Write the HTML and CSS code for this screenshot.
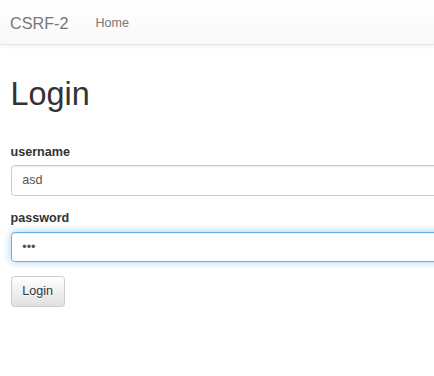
FILE: index.html
```html
<!DOCTYPE html>
<html lang="en">
  <head>
    <meta charset="utf-8" />
    <meta name="viewport" content="width=device-width, initial-scale=1" />
    <title>CSRF-2</title>
    <link rel="stylesheet" href="styles.css">
  </head>
  <body>
    <nav class="navbar">
      <a class="navbar-brand" href="#">CSRF-2</a>
      <ul class="nav">
        <li><a href="#">Home</a></li>
      </ul>
    </nav>

    <div class="container">
      <h1>Login</h1>
      <form class="login-form">
        <div class="form-group">
          <label for="username">username</label>
          <input class="form-control" id="username" type="text" value="asd" />
        </div>
        <div class="form-group">
          <label for="password">password</label>
          <input class="form-control focused" id="password" type="password" value="asd" />
        </div>
        <button class="btn" type="submit">Login</button>
      </form>
    </div>
  </body>
</html>
```

FILE: styles.css
```css
* {
  box-sizing: border-box;
}
html,
body {
  margin: 0;
  width: 100%;
  overflow: hidden;
}
body {
  font-family: "Liberation Sans", Arial, sans-serif;
  font-size: 12.6px;
  line-height: 18px;
  color: #333;
  background: #fff;
}
a {
  text-decoration: none;
}

.navbar {
  display: flex;
  align-items: flex-start;
  min-height: 45px;
  background: linear-gradient(to bottom, #fff 0, #f8f8f8 100%);
  border-bottom: 1px solid #e7e7e7;
  box-shadow: inset 0 1px 0 rgba(255, 255, 255, 0.15), 0 1px 5px rgba(0, 0, 0, 0.075);
}
.navbar-brand {
  padding: 13.5px 13.5px 12.5px 10px;
  font-size: 16.2px;
  line-height: 18px;
  color: #777;
}
.nav {
  display: flex;
  margin: 0;
  padding: 0;
  list-style: none;
}
.nav a {
  display: block;
  padding: 13.5px 13.5px 12.5px;
  color: #777;
}

.container {
  padding: 0 10.5px;
  width: 560px;
}
h1 {
  margin: 32px 0 30px;
  font-size: 32.4px;
  line-height: 35.6px;
  font-weight: 500;
}
.form-group {
  margin-bottom: 13.5px;
}
label {
  display: block;
  margin-bottom: 4.5px;
  font-weight: bold;
}
.form-control {
  display: block;
  width: 100%;
  height: 30.6px;
  padding: 5.4px 10.8px;
  font: inherit;
  color: #555;
  background: #fff;
  border: 1px solid #ccc;
  border-radius: 3.6px;
  box-shadow: inset 0 1px 1px rgba(0, 0, 0, 0.075);
  outline: none;
}
.form-control.focused {
  border-color: #66afe9;
  box-shadow: inset 0 1px 1px rgba(0, 0, 0, 0.075), 0 0 8px rgba(102, 175, 233, 0.6);
}
.btn {
  display: inline-block;
  padding: 5.4px 10.8px;
  font: inherit;
  color: #333;
  background: linear-gradient(to bottom, #fff 0, #e0e0e0 100%);
  border: 1px solid #ccc;
  border-radius: 3.6px;
  text-shadow: 0 1px 0 #fff;
  box-shadow: inset 0 1px 0 rgba(255, 255, 255, 0.15), 0 1px 1px rgba(0, 0, 0, 0.075);
  cursor: pointer;
}
```
